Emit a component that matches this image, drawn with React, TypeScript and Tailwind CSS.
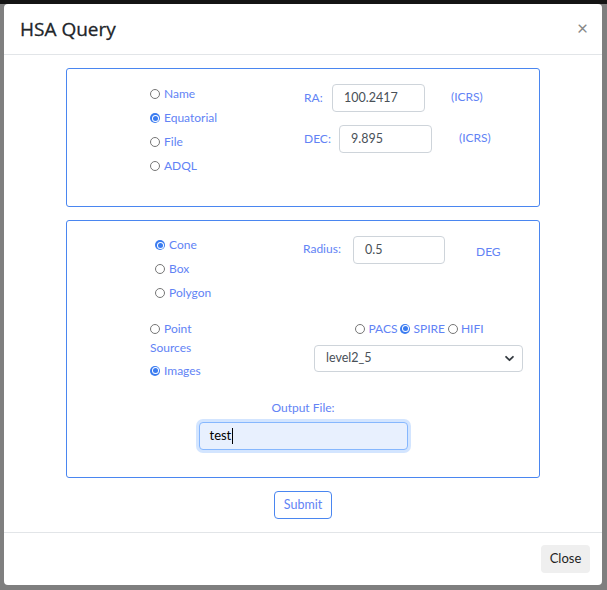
import React from 'react';

const blue = 'text-[#6283f5]';

function Radio({ checked = false }: { checked?: boolean }) {
  if (checked) {
    return (
      <span className="inline-flex shrink-0 w-[10px] h-[10px] rounded-full bg-[#3b7cf0] p-[1.5px]">
        <span className="flex w-full h-full rounded-full bg-white p-[1px]">
          <span className="w-full h-full rounded-full bg-[#3b7cf0]" />
        </span>
      </span>
    );
  }
  return <span className="inline-block shrink-0 w-[10px] h-[10px] rounded-full border border-[#767676] bg-white" />;
}

function RadioRow({ label, checked }: { label: string; checked?: boolean }) {
  return (
    <div className="flex items-center gap-[4px] h-[24px]">
      <Radio checked={checked} />
      <span className={blue}>{label}</span>
    </div>
  );
}

function TextBox({ value, width }: { value: string; width: string }) {
  return (
    <div className={`${width} h-[28px] border border-[#ced4da] rounded-[4px] flex items-center pl-[11px] text-[#495057] text-[12.5px]`}>
      {value}
    </div>
  );
}

export default function App() {
  return (
    <div className="w-full h-[590px] bg-[#7f7f7f] border-t-[4px] border-[#141414] overflow-hidden font-['Lato',sans-serif] text-[12px]">
      <div className="ml-[4px] w-[598px] h-[581px] bg-white rounded-[4px] flex flex-col">
        {/* header */}
        <div className="h-[51px] flex items-center justify-between pl-[16px] pr-[14px] border-b border-[#e2e5e8]">
          <h5 className="text-[19px] font-['Open_Sans',sans-serif] font-medium text-[#212529] [-webkit-text-stroke:0.3px_#212529]">HSA Query</h5>
          <span className="text-[19px] leading-none text-[#888] -mt-[4px] ml-[1px]">×</span>
        </div>

        {/* body */}
        <div className="px-[62px] pt-[13px]">
          {/* target box */}
          <div className="h-[139px] border border-[#4a86f0] rounded-[3px] flex pl-[83px]">
            <div className="w-[154px] pt-[13px]">
              <RadioRow label="Name" />
              <RadioRow label="Equatorial" checked />
              <RadioRow label="File" />
              <RadioRow label="ADQL" />
            </div>
            <div className="pt-[15px]">
              <div className="flex items-center">
                <span className={`${blue} w-[28px]`}>RA:</span>
                <TextBox value="100.2417" width="w-[93px]" />
                <span className={`${blue} ml-[26px] -mt-[3px]`}>(ICRS)</span>
              </div>
              <div className="flex items-center mt-[13px]">
                <span className={`${blue} w-[35px]`}>DEC:</span>
                <TextBox value="9.895" width="w-[93px]" />
                <span className={`${blue} ml-[27px] -mt-[3px]`}>(ICRS)</span>
              </div>
            </div>
          </div>

          {/* search box */}
          <div className="mt-[13px] h-[258px] border border-[#4a86f0] rounded-[3px] flex flex-col">
            <div className="flex pl-[88px]">
              <div className="w-[148px] pt-[12px]">
                <RadioRow label="Cone" checked />
                <RadioRow label="Box" />
                <RadioRow label="Polygon" />
              </div>
              <div className="pt-[15px] flex items-center self-start">
                <span className={`${blue} w-[50px] -mt-[2px]`}>Radius:</span>
                <TextBox value="0.5" width="w-[92px]" />
                <span className={`${blue} ml-[31px] mt-[4px]`}>DEG</span>
              </div>
            </div>

            <div className="flex mt-[14px] pl-[83px]">
              <div className="w-[164px]">
                <div className="w-[62px] leading-[19px]">
                  <span className="inline-flex items-center align-middle -mt-[2px] mr-[4px]"><Radio /></span>
                  <span className={blue}>Point Sources</span>
                </div>
                <div className="flex items-center gap-[4px] h-[19px] mt-[4px]">
                  <Radio checked />
                  <span className={blue}>Images</span>
                </div>
              </div>
              <div className="w-[209px]">
                <div className="flex items-center justify-center h-[19px] gap-[3px] pl-[2px]">
                  <Radio />
                  <span className={blue}>PACS</span>
                  <Radio checked />
                  <span className={blue}>SPIRE</span>
                  <Radio />
                  <span className={blue}>HIFI</span>
                </div>
                <div className="mt-[7px] h-[27px] border border-[#ced4da] rounded-[4px] flex items-center justify-between pl-[11px] pr-[7px] text-[#495057] text-[12.5px]">
                  <span>level2_5</span>
                  <svg width="11" height="11" viewBox="0 0 16 16" fill="none">
                    <path d="M3 5.5l5 5 5-5" stroke="#343a40" strokeWidth="2.6" strokeLinecap="round" strokeLinejoin="round" />
                  </svg>
                </div>
              </div>
            </div>

            <div className="flex flex-col items-center mt-[18px]">
              <span className={`${blue} leading-[19px]`}>Output File:</span>
              <div className="mt-[5px] w-[209px] h-[28px] rounded-[4px] border border-[#86b7fe] bg-[#e8f0fe] shadow-[0_0_0_3px_rgba(13,110,253,0.18)] flex items-center pl-[10px] text-[13px] text-black">
                test<span className="w-px h-[16px] bg-black ml-[1px]" />
              </div>
            </div>
          </div>

          <div className="flex justify-center mt-[13px]">
            <button className={`w-[58px] h-[28px] border border-[#4a86f0] rounded-[4px] ${blue} text-[12.5px]`}>Submit</button>
          </div>
        </div>

        {/* footer */}
        <div className="mt-[13px] border-t border-[#e2e5e8] flex justify-end pt-[12px] pr-[12px]">
          <button className="w-[49px] h-[28px] rounded-[4px] bg-[#efefef] text-[13px] text-[#1e1e1e]">Close</button>
        </div>
      </div>
    </div>
  );
}
